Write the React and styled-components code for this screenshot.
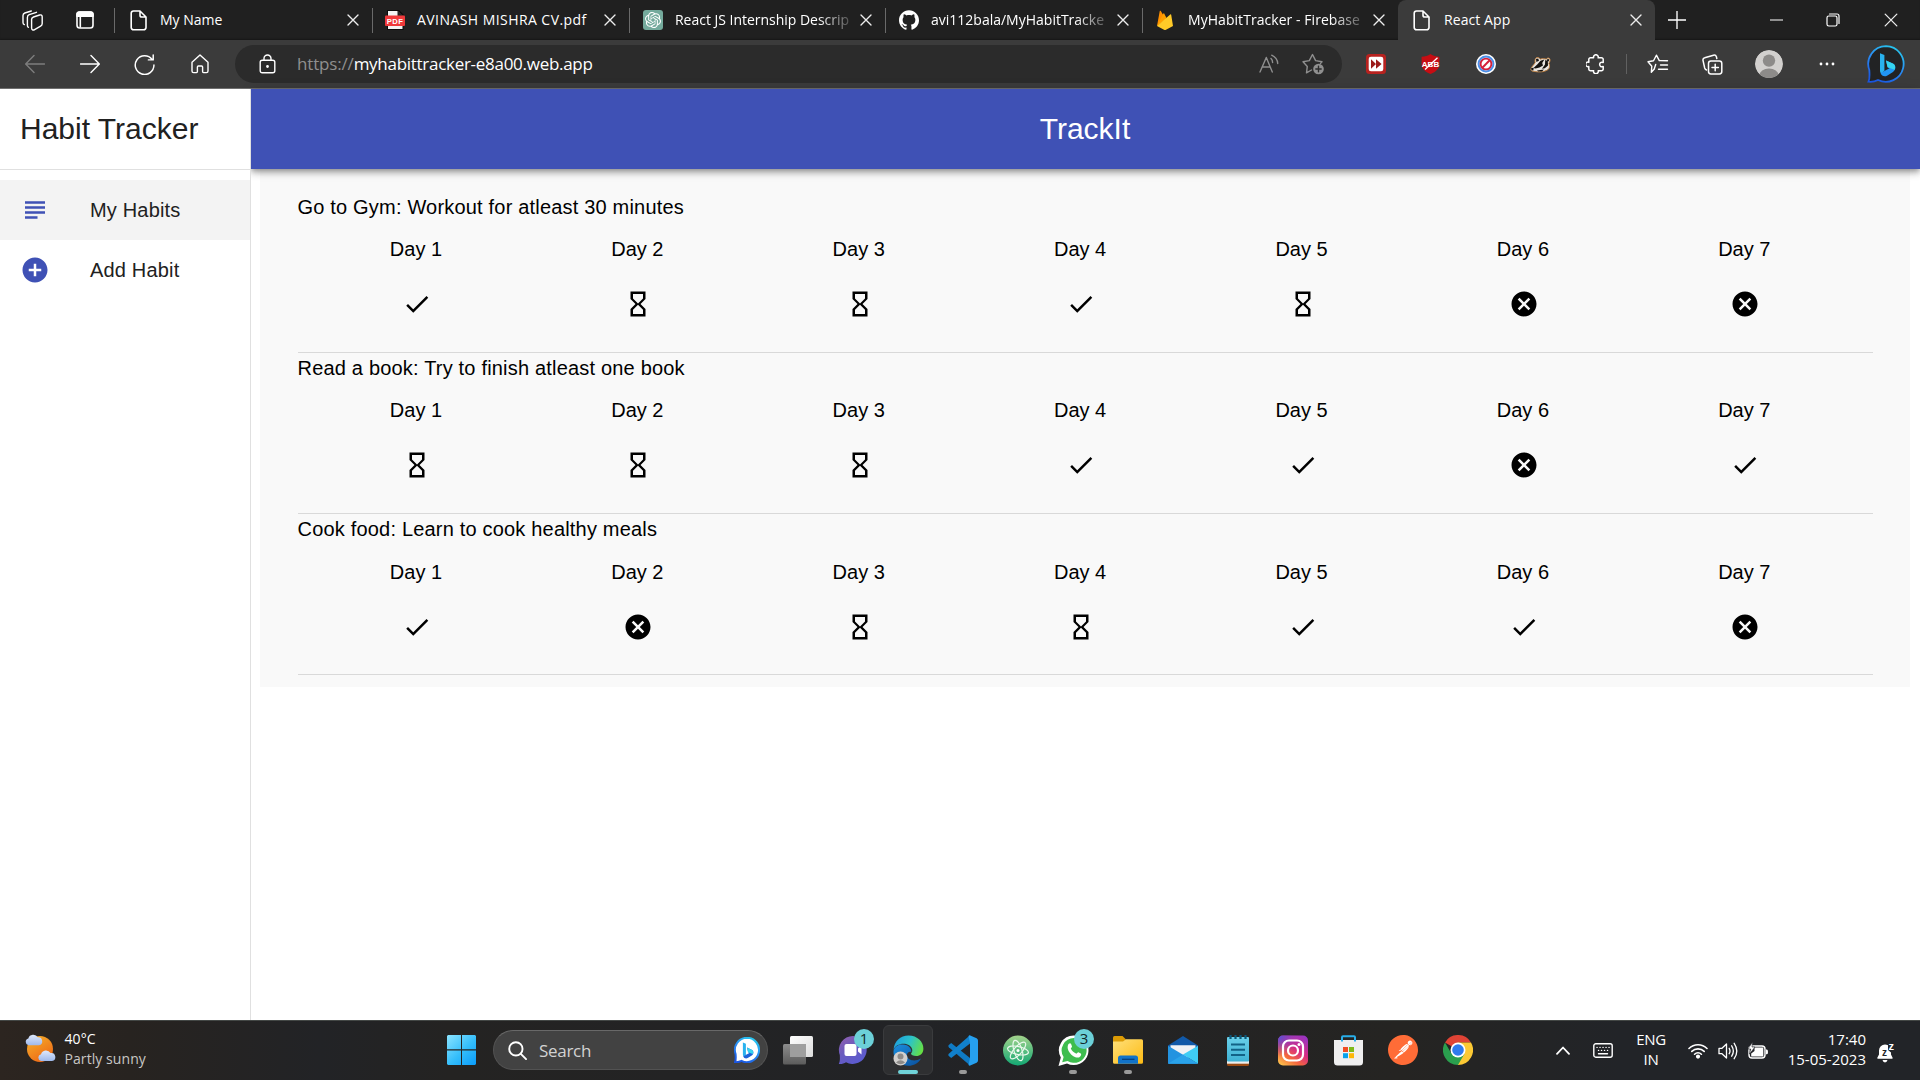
import React from "react";
import styled, { createGlobalStyle, css } from "styled-components";
import { SiOpenai, SiGithub, SiPostman } from "react-icons/si";

const uiFont = `"Open Sans", "Noto Sans", sans-serif`;
const pageFont = `"Liberation Sans", Arial, sans-serif`;

const GlobalStyle = createGlobalStyle`
  * { box-sizing: border-box; }
  html, body { margin: 0; padding: 0; background: #fff; overflow: hidden; }
  svg { display: block; flex: none; }
`;

const Screen = styled.div`
  width: 1920px;
  height: 1080px;
  display: flex;
  flex-direction: column;
  overflow: hidden;
`;

/* ---------- browser tabs ---------- */
const TabStrip = styled.div`
  height: 40px;
  flex: none;
  background: #202020;
  display: flex;
  box-shadow: inset 0 -2px 2px -1px #171717;
`;
const StripTools = styled.div`
  width: 114px;
  flex: none;
  display: flex;
  align-items: center;
  padding-left: 22px;
  gap: 33px;
`;
const Tab = styled.div`
  width: ${(p) => p.$w}px;
  height: 40px;
  flex: none;
  display: flex;
  align-items: center;
  padding-left: ${(p) => p.$pad}px;
  padding-right: 13px;
  color: #fff;
  ${(p) =>
    p.$active
      ? css`
          background: #3b3b3b;
          border-radius: 8px 8px 0 0;
        `
      : css`
          background: linear-gradient(#6a6a6a, #6a6a6a) left center / 1px 25px no-repeat;
        `}
`;
const Favicon = styled.div`
  width: 20px;
  display: flex;
  justify-content: center;
  flex: none;
`;
const TabTitle = styled.div`
  flex: 1;
  min-width: 0;
  margin-left: ${(p) => p.$gap}px;
  margin-right: 6px;
  white-space: nowrap;
  font: 14px/20px ${uiFont};
  letter-spacing: ${(p) => p.$ls}px;
  ${(p) =>
    p.$fade &&
    css`
      mask-image: linear-gradient(to right, #000 calc(100% - 36px), rgba(0, 0, 0, 0.1));
    `}
`;
const WindowControls = styled.div`
  flex: 1;
  display: flex;
  align-items: center;
  padding-left: 13px;
`;
const Slot = styled.div`
  width: ${(p) => p.$w}px;
  height: 100%;
  display: flex;
  align-items: center;
  justify-content: center;
  flex: none;
`;

/* ---------- toolbar ---------- */
const Toolbar = styled.div`
  height: 49px;
  flex: none;
  background: #3b3b3b;
  border-bottom: 1px solid #6f6f6f;
  display: flex;
  align-items: center;
  padding-left: 7px;
`;
const AddressBar = styled.div`
  width: 1107px;
  height: 38px;
  margin: 0 6.4px 0 8px;
  border-radius: 19px;
  background: #2b2b2b;
  display: flex;
  align-items: center;
  padding: 0 6px 0 24px;
`;
const Url = styled.div`
  flex: 1;
  margin-left: 21px;
  color: #fff;
  font: 17px/24px ${uiFont};
  letter-spacing: -0.28px;
`;
const Scheme = styled.span`
  color: #8f8f8f;
  letter-spacing: -0.17px;
`;
const BarDivider = styled.div`
  width: 1px;
  height: 20px;
  margin: 0 3px;
  background: #616161;
`;

/* ---------- web page ---------- */
const Page = styled.div`
  height: 931px;
  flex: none;
  display: flex;
  background: #fff;
  font-family: ${pageFont};
`;
const Sidebar = styled.div`
  width: 251px;
  flex: none;
  position: relative;
  z-index: 2;
  background: #fff;
  border-right: 1px solid #e0e0e0;
`;
const SidebarHeader = styled.div`
  height: 81px;
  border-bottom: 1px solid #e0e0e0;
  padding-left: 20px;
  font-size: 30px;
  line-height: 80px;
  color: #212121;
  white-space: nowrap;
`;
const Nav = styled.div`
  padding-top: 10px;
`;
const NavItem = styled.div`
  height: 60px;
  display: flex;
  align-items: center;
  padding-left: 20px;
  gap: 40px;
  background: ${(p) => (p.$selected ? "#f3f3f3" : "transparent")};
  color: #212121;
  font-size: 20px;
  letter-spacing: 0.17px;
`;
const Main = styled.div`
  flex: 1;
  display: flex;
  flex-direction: column;
`;
const AppBar = styled.div`
  height: 80px;
  flex: none;
  position: relative;
  z-index: 1;
  background: #3f51b5;
  color: #fff;
  text-align: center;
  padding-right: 1px;
  font-size: 30px;
  line-height: 80px;
  box-shadow: 0 2px 5px -1px rgba(0, 0, 0, 0.3), 0 5px 6px 0 rgba(0, 0, 0, 0.16),
    0 1px 12px 0 rgba(0, 0, 0, 0.13);
`;
const HabitPanel = styled.div`
  margin: 0 10px 0 9px;
  padding: 23px 37px 13px 37.5px;
  height: 518px;
  background: #f9f9f9;
`;
const Habit = styled.div`
  height: 161.15px;
  border-bottom: 1px solid #d9d9d9;
  font-size: 20px;
  line-height: 30px;
  color: #000;
`;
const HabitTitle = styled.div`
  height: 42.27px;
  letter-spacing: 0.19px;
`;
const Days = styled.div`
  display: grid;
  grid-template-columns: repeat(7, 221.4px);
  padding-left: 7.75px;
`;
const Day = styled.div`
  display: flex;
  flex-direction: column;
  align-items: center;
  gap: 25px;
`;
const StatusIcon = styled.div`
  padding-left: 2px;
`;

/* ---------- taskbar ---------- */
const Taskbar = styled.div`
  height: 60px;
  flex: none;
  border-top: 1px solid #434745;
  background: linear-gradient(90deg, #2c2520 0, #272320 130px, #222326 320px, #242322 450px, #222326 900px, #252422 1400px, #222428 1620px, #222428 100%);
  display: flex;
  color: #fff;
  font-family: ${uiFont};
`;
const Weather = styled.div`
  width: 434px;
  height: 55px;
  padding-left: 25px;
  display: flex;
  align-items: center;
  gap: 8.5px;
`;
const TwoLines = styled.div`
  font-size: ${(p) => p.$size || 15}px;
  line-height: 20px;
  text-align: ${(p) => p.$align || "left"};
  letter-spacing: ${(p) => p.$ls || 0}px;
  white-space: nowrap;
  padding-bottom: ${(p) => (p.$flush ? 0 : 3)}px;
`;
const Muted = styled.div`
  color: #c9c7c5;
`;
const SearchBox = styled.div`
  width: 275px;
  height: 40px;
  margin: 9px 2.5px 0 4px;
  border-radius: 20px;
  background: #424242;
  border: 1px solid #525252;
  border-top-color: #686868;
  display: flex;
  align-items: center;
  padding: 0 7px 0 14px;
  gap: 12px;
  font-size: 17px;
  letter-spacing: -0.3px;
  color: #d2d2d2;
`;
const Grow = styled.span`
  flex: 1;
`;
const AppSlot = styled.div`
  width: 55px;
  height: 58px;
  flex: none;
  position: relative;
  display: flex;
  align-items: center;
  justify-content: center;
`;
const AppTile = styled.div`
  width: 50px;
  height: 50px;
  border-radius: 6px;
  display: flex;
  align-items: center;
  justify-content: center;
  background: ${(p) => (p.$active ? "#2e2f31" : "transparent")};
  border: 1px solid ${(p) => (p.$active ? "#3a3b3d" : "transparent")};
`;
const Indicator = styled.div`
  position: absolute;
  bottom: 5px;
  left: ${(p) => (p.$active ? 17.5 : 23.5)}px;
  width: ${(p) => (p.$active ? 20 : 8)}px;
  height: 4px;
  border-radius: 2px;
  background: ${(p) => (p.$active ? "#6fd3d9" : "#9a9a9a")};
`;
const Badge = styled.div`
  position: absolute;
  top: 8px;
  left: 28.5px;
  width: 20px;
  height: 20px;
  border-radius: 50%;
  background: #6cd0d8;
  color: #10282a;
  font: 15px/19px ${uiFont};
  text-align: center;
`;
const Tray = styled.div`
  flex: 1;
  display: flex;
  align-items: center;
  justify-content: flex-end;
  padding-right: 19px;
`;
const Clock = styled.div`
  width: 94px;
  display: flex;
  justify-content: flex-end;
  padding-right: 5px;
`;

/* ---------- icons ---------- */
const Line = ({ w = 20, h, vb = "0 0 20 20", c = "#fff", s = 1.2, children }) => (
  <svg width={w} height={h || w} viewBox={vb} fill="none" stroke={c} strokeWidth={s} strokeLinecap="round" strokeLinejoin="round">
    {children}
  </svg>
);
const PageIcon = () => (
  <Line w={17} h={21} vb="0 0 17 21" s={1.6}>
    <path d="M3.5 1H10L16 7V17.5a2.3 2.3 0 0 1-2.3 2.3H3.5A2.3 2.3 0 0 1 1.2 17.5V3.3A2.3 2.3 0 0 1 3.5 1ZM10 1.2V5.2A1.8 1.8 0 0 0 11.8 7H15.8" />
  </Line>
);
const Close = ({ w = 12 }) => (
  <Line w={w} vb="0 0 12 12" s={w > 12 ? 1.1 : 1.35} c="#eee">
    <path d="M1 1 11 11M11 1 1 11" />
  </Line>
);
const PdfIcon = () => (
  <svg width="20" height="20" viewBox="0 0 20 20">
    <path d="M2 0H14L18.5 4.5V20H2Z" fill="#0b0b0b" />
    <path d="M3 1H12.5L17.5 6V19H3Z" fill="#f3f3f3" />
    <path d="M12.5 0.8V6H17.8Z" fill="#222" />
    <rect x="0" y="5.5" width="20" height="10.5" rx="1" fill="#f0383a" />
    <text x="10" y="13.5" textAnchor="middle" fontFamily="Liberation Sans, sans-serif" fontWeight="700" fontSize="7.6" letterSpacing="0.4" fill="#fff">PDF</text>
  </svg>
);
const ChatBadge = styled.div`
  width: 20px;
  height: 20px;
  border-radius: 3px;
  background: #74aa9c;
  color: #fff;
  display: flex;
  align-items: center;
  justify-content: center;
`;
const Flame = () => (
  <svg width="16" height="20" viewBox="0 0 16 20">
    <path d="M0 16 2.7 1.2C2.8.6 3.5.6 3.8 1L6.5 5.5 9 9Z" fill="#ff8f00" />
    <path d="M0 16 6.3 3.7c.3-.5.8-.4 1 0L9.5 8Z" fill="#ffa000" />
    <path d="M0 16 13.2 4.5c.4-.4.9-.2 1 .3L16 16 9 19.7a2 2 0 0 1-2 0Z" fill="#ffca28" />
  </svg>
);
const BingB = ({ w = 38, light }) => (
  <svg width={w} height={w} viewBox="0 0 38 38">
    <defs>
      <linearGradient id={light ? "bl" : "bd"} x1="0.2" y1="1" x2="0.7" y2="0">
        <stop offset="0" stopColor="#1a55e0" />
        <stop offset="0.55" stopColor="#2a8df2" />
        <stop offset="1" stopColor="#27c5ee" />
      </linearGradient>
    </defs>
    <path d="M19 1.2A17.8 17.8 0 1 1 11 35C8 36.5 4.5 37 1.5 36.7 3 33.5 2.6 30 2.3 25A17.8 17.8 0 0 1 19 1.2Z" fill={light ? "#fff" : "#222324"} stroke={`url(#${light ? "bl" : "bd"})`} strokeWidth={light ? 3 : 1.8} />
    <path d="M13 8.2 17.4 10V25.2L14.8 29C13.6 28.2 13 27 13 25.4Z" fill="#29b2ee" />
    <path d="M19 15.4 25.8 18.6C29.5 20.5 29 25 26 27L20 30.7C17.5 32 14.5 31 13.6 28L22.5 23.3 20.6 22.2Z" fill={light ? "#1c63d8" : "#2196f3"} />
    <path d="M19 15.4 25.8 18.6C28.5 20 28.6 23 27.5 24.7L20.6 22.2Z" fill="#35d4ee" />
  </svg>
);
const Material = ({ d, w = 30, c = "#000" }) => (
  <svg width={w} height={w} viewBox="0 0 24 24" fill={c}>
    <path d={d} />
  </svg>
);
const statusPaths = {
  done: "M9 16.2L4.8 12l-1.4 1.4L9 19 21 7l-1.4-1.4L9 16.2z",
  wait: "M6 2v6h.01L6 8.01 10 12l-4 4 .01.01H6V22h12v-5.99h-.01L18 16l-4-4 4-3.99-.01-.01H18V2H6zm10 14.5V20H8v-3.5l4-4 4 4zm-4-5l-4-4V4h8v3.5l-4 4z",
  miss: "M12 2C6.47 2 2 6.47 2 12s4.47 10 10 10 10-4.47 10-10S17.53 2 12 2zm5 13.59L15.59 17 12 13.41 8.41 17 7 15.59 10.59 12 7 8.41 8.41 7 12 10.59 15.59 7 17 8.41 13.41 12 17 15.59z",
};
const AvatarIcon = () => (
  <svg width="28" height="28" viewBox="0 0 28 28">
    <defs>
      <clipPath id="face"><circle cx="14" cy="14" r="14" /></clipPath>
    </defs>
    <g clipPath="url(#face)">
      <circle cx="14" cy="14" r="14" fill="#d2d0ce" />
      <circle cx="14" cy="10.6" r="6.2" fill="#8d8b89" />
      <ellipse cx="14" cy="25.5" rx="9.6" ry="7" fill="#8d8b89" />
    </g>
  </svg>
);

const tabs = [
  { title: "My Name", icon: <PageIcon />, w: 258, pad: 14, gap: 12, ls: 0 },
  { title: "AVINASH MISHRA CV.pdf", icon: <PdfIcon />, w: 257, pad: 13, gap: 12, ls: 0.44 },
  { title: "React JS Internship Descrip", icon: <ChatBadge><SiOpenai size={16} /></ChatBadge>, w: 256, pad: 14, gap: 12, ls: -0.02, fade: true },
  { title: "avi112bala/MyHabitTracke", icon: <SiGithub size={20} />, w: 257, pad: 14, gap: 12, ls: 0, fade: true },
  { title: "MyHabitTracker - Firebase", icon: <Flame />, w: 256, pad: 13, gap: 13, ls: 0.05, fade: true },
  { title: "React App", icon: <PageIcon />, w: 257, pad: 13, gap: 13, ls: 0.08, active: true },
];

const habits = [
  { title: "Go to Gym: Workout for atleast 30 minutes", days: ["done", "wait", "wait", "done", "wait", "miss", "miss"] },
  { title: "Read a book: Try to finish atleast one book", days: ["wait", "wait", "wait", "done", "done", "miss", "done"] },
  { title: "Cook food: Learn to cook healthy meals", days: ["done", "miss", "wait", "wait", "done", "done", "miss"] },
];

const TopTabs = () => (
  <TabStrip>
    <StripTools>
      <Line w={21} h={21} vb="0 0 21 21" s={1.4}>
        <path d="M11.5 7 17.6 5C19.2 4.5 20.2 5.3 20.2 6.8V13.4C20.2 14.7 19.7 15.5 18.6 16.1L12.6 19.6C11 20.5 9.6 19.8 9.6 18.1V9.3C9.6 8 10.3 7.4 11.5 7Z" />
        <path d="M6.4 17.3C5.7 17 5.4 16.3 5.4 15.5V7.4C5.4 5.9 6 5.2 7.2 4.7L14.5 2.3M2.3 14.6C1.4 14.2 1 13.4 1 12.5V5.6C1 4.2 1.6 3.4 2.8 3L9.3 1" />
      </Line>
      <Line w={18} h={18} vb="0 0 18 18" s={1.6}>
        <rect x="1" y="1" width="16" height="16" rx="2.8" />
        <path d="M1 3.5Q1 1 3.5 1H14.5Q17 1 17 3.5V5.2H1ZM4.3 5.5V16" fill="#fff" />
      </Line>
    </StripTools>
    {tabs.map((t) => (
      <Tab key={t.title} $w={t.w} $pad={t.pad} $active={t.active}>
        <Favicon>{t.icon}</Favicon>
        <TabTitle $gap={t.gap} $ls={t.ls} $fade={t.fade}>{t.title}</TabTitle>
        <Close />
      </Tab>
    ))}
    <WindowControls>
      <Line w={18} s={1.5}><path d="M10 0V20M0 10H20" /></Line>
      <Slot $w={61} />
      <Slot $w={58}><Line w={13} h={2} vb="0 0 13 2" s={1.2}><path d="M0 1H13" /></Line></Slot>
      <Slot $w={56}>
        <Line w={14} vb="0 0 14 14"><rect x="1" y="3" width="10" height="10" rx="1.8" /><path d="M3.5 1H11A2 2 0 0 1 13 3V10.5" /></Line>
      </Slot>
      <Slot $w={60}><Close w={14} /></Slot>
    </WindowControls>
  </TabStrip>
);

const BrowserBar = () => (
  <Toolbar>
    <Slot $w={55}><Line w={20} c="#7d7d7d" s={1.4}><path d="M19.5 10H1M9 1.5.7 10 9 18.5" /></Line></Slot>
    <Slot $w={55}><Line w={20} s={1.4}><path d="M.5 10H19M11 1.5 19.3 10 11 18.5" /></Line></Slot>
    <Slot $w={55}><Line w={21} s={1.4}><path d="M17.2 5.2A8.9 8.9 0 1 0 19 10.5M18.3 1V5.6H13.7" /></Line></Slot>
    <Slot $w={55}><Line w={20} s={1.4}><path d="M2 8.3 10 1 18 8.3V17A1.6 1.6 0 0 1 16.4 18.6H13.5Q12.6 18.6 12.6 17.6V13Q12.6 12 11.6 12H8.4Q7.4 12 7.4 13V17.6Q7.4 18.6 6.5 18.6H3.6A1.6 1.6 0 0 1 2 17Z" /></Line></Slot>
    <AddressBar>
      <Line w={17} h={20} vb="0 0 17 20" s={1.4}>
        <rect x="1.2" y="6.2" width="14.6" height="12.6" rx="2" />
        <path d="M5 6V4.5A3.5 3.5 0 0 1 12 4.5V6" />
        <circle cx="8.5" cy="12.5" r="0.7" fill="#fff" />
      </Line>
      <Url><Scheme>https://</Scheme>myhabittracker-e8a00.web.app</Url>
      <Slot $w={45}>
        <Line w={20} c="#8f8f8f" s={1.4}><path d="M1 18 7.3 3.5 13.3 18M3.3 13H11.2M12 4.5Q13.6 6 13.6 8.5M12.7 1.2Q18.5 4 18.7 9.5" /></Line>
      </Slot>
      <Slot $w={45}>
        <svg width="23" height="22" viewBox="0 0 23 22" fill="none" stroke="#8f8f8f" strokeWidth="1.4" strokeLinejoin="round" strokeLinecap="round">
          <path d="M9.5 17 4.5 19.8 5.3 13.4 1 8.8 7.3 7.6 10.5 1.5 13.6 7.6 20 8.8 18.4 10.4" />
          <circle cx="16.5" cy="16" r="5.3" fill="#8f8f8f" stroke="none" />
          <path d="M16.5 13.3V18.7M13.8 16H19.2" stroke="#2b2b2b" />
        </svg>
      </Slot>
    </AddressBar>
    <Slot $w={55}>
      <svg width="20" height="20" viewBox="0 0 20 20">
        <rect width="20" height="20" rx="3.5" fill="#b7221f" />
        <rect x="2.7" y="2.7" width="14.6" height="14.6" rx="2.3" fill="#fff" />
        <path d="M5 5.2 10 10 5 14.8ZM10 5.2 15.6 10 10 14.8Z" fill="#9c1c1b" />
      </svg>
    </Slot>
    <Slot $w={55}>
      <svg width="19" height="20" viewBox="0 0 19 20">
        <path d="M9.5 0C12 1.8 15 2.5 18.4 2.8V10C18.4 15 14 18.5 9.5 20 5 18.5.6 15 .6 10V2.8C4 2.5 7 1.8 9.5 0Z" fill="#c70d13" />
        <text x="9.5" y="12.8" textAnchor="middle" fontFamily="Liberation Sans, sans-serif" fontWeight="700" fontSize="8" fill="#fff">ABB</text>
        <path d="M4 15.5 16.5 3.8" stroke="#fff" strokeWidth="1.3" />
      </svg>
    </Slot>
    <Slot $w={55}>
      <svg width="20" height="20" viewBox="0 0 20 20">
        <circle cx="10" cy="10" r="10" fill="#fff" />
        <circle cx="10" cy="10" r="7.4" fill="#fff" stroke="#4a8fe8" strokeWidth="2" />
        <circle cx="10" cy="10" r="5.4" fill="#fff" stroke="#d3213c" strokeWidth="1.9" />
        <path d="M6.3 13.7 13.7 6.3" stroke="#d3213c" strokeWidth="2" />
      </svg>
    </Slot>
    <Slot $w={55}>
      <svg width="21" height="17" viewBox="0 0 21 17">
        <path d="M.8 13.2C1.5 10.5 4 9 5.2 6.5 4.6 4.5 5.2 2.2 6.8 1.6 8.3 1.2 9.6 2 10.2 3.2 12.5 2.4 14.8 2.6 16.4 3.2 17 2 18.6 1.6 19.6 2.6 20.6 4 19.8 6 18.8 7.2 20 9.5 19.8 12 18 13.6 14 16.4 8 16.2 4.5 15.4 2.5 15.4.8 14.8.8 13.2Z" fill="#e8e4df" stroke="#c9843f" strokeWidth="0.9" />
        <path d="M3.5 12 7.5 8.2 10.5 4.8 14.4 3.4 12.2 7 13 9.4 9.5 11.6 5.5 12.6ZM15.2 4 17.8 5 18 9.4 14.8 12.2 12 12.8 15 8.4ZM6 3 8.2 2.6 9 4.8 6.4 6ZM17.3 3 19.2 3.2 18.8 5.4 17 4.8ZM1.2 12 3.6 11.8 3.4 14.6 1.4 14.2ZM7 14.6 14 13.4 12 15.6 8 15.6Z" fill="#15120f" />
      </svg>
    </Slot>
    <Slot $w={55}>
      <Line w={20} s={1.5}><path d="M4.5 3.8H7.6A2.4 2.4 0 1 1 12.2 3.8H15.5A1.7 1.7 0 0 1 17.2 5.5V8.4H16.5A2.2 2.2 0 1 0 16.5 12.6H17.2V15A1.7 1.7 0 0 1 15.5 16.7H12.2A2.4 2.4 0 1 1 7.6 16.7H4.5A1.7 1.7 0 0 1 2.8 15V12.5A2.3 2.3 0 1 1 2.8 8.2V5.5A1.7 1.7 0 0 1 4.5 3.8Z" /></Line>
    </Slot>
    <BarDivider />
    <Slot $w={55}>
      <Line w={22} h={20} vb="0 0 22 20" s={1.4}><path d="M7.5 14.8 4.3 18.3 4.8 12.3 1 7.8 6.5 6.8 9.4 1.2 12.3 6.6 20.5 6.8M13.5 11H20.5M11.5 15.3H20.5M8.7 10.5 7.3 14.8" /></Line>
    </Slot>
    <Slot $w={55}>
      <Line w={21} vb="0 0 21 21" s={1.5}><rect x="6.5" y="7" width="13.3" height="13" rx="2.4" /><path d="M13.2 10.3V16.7M10 13.5H16.4M4.5 16C3.5 15.6 3 15 2.7 14L1 6.3C.8 5 1.5 4 2.7 3.7L11.5 1.2C13 .9 14 1.5 14.4 2.7L14.8 4.5" /></Line>
    </Slot>
    <Slot $w={58}><AvatarIcon /></Slot>
    <Slot $w={58}>
      <svg width="16" height="4" viewBox="0 0 16 4" fill="#fff"><circle cx="2" cy="2" r="1.4" /><circle cx="8" cy="2" r="1.4" /><circle cx="14" cy="2" r="1.4" /></svg>
    </Slot>
    <Slot $w={60}><BingB /></Slot>
  </Toolbar>
);

const EdgeIcon = () => (
  <svg width="31" height="31" viewBox="0 0 31 31">
    <defs>
      <linearGradient id="eg" x1="0" y1="0.3" x2="1" y2="0.6">
        <stop offset="0" stopColor="#1d9fe0" /><stop offset="0.5" stopColor="#2cc3c9" /><stop offset="1" stopColor="#66e043" />
      </linearGradient>
      <linearGradient id="eb" x1="0" y1="0" x2="1" y2="1">
        <stop offset="0" stopColor="#1b8fe0" /><stop offset="1" stopColor="#0a4f9c" />
      </linearGradient>
    </defs>
    <path d="M.6 15.5C2 11 6 9.2 10 9.5 16 10 18.5 13.5 18.3 17 16 16 13.5 18 14 21 15 25.5 22 27 28 23.5 24.5 30 17 32 10.5 30 3.5 27.5-.2 21.5.6 15.5Z" fill="url(#eb)" />
    <path d="M.6 15C1 6.5 7.5.6 15.5.6 24.5.6 30.5 7 30.4 13.7 30.3 18.5 27 21 23.3 21 20 21 18 20 18 18.8 18 18 19.5 17.5 19.3 15 19 11.5 15 8.8 10.5 8.8 6 8.8 1.8 11 .6 15Z" fill="url(#eg)" />
    <circle cx="7.5" cy="23.5" r="7" fill="#d2d0ce" />
    <circle cx="7.5" cy="21.6" r="3" fill="#8d8b89" />
    <path d="M3 27.6Q7.5 23 12 27.6 7.5 31 3 27.6Z" fill="#8d8b89" />
  </svg>
);
const TaskViewIcon = () => (
  <svg width="30" height="30" viewBox="0 0 30 30">
    <defs><linearGradient id="tv" x1="0" y1="0" x2="1" y2="1"><stop offset="0" stopColor="#fff" /><stop offset="1" stopColor="#dcdcdc" /></linearGradient>
    <linearGradient id="tw" x1="0" y1="0" x2="0" y2="1"><stop offset="0" stopColor="#8c8c8c" /><stop offset="1" stopColor="#5c5c5c" /></linearGradient></defs>
    <rect x="7" y="1" width="23" height="21" rx="1.5" fill="url(#tv)" />
    <rect x="0" y="9" width="23" height="20.5" rx="1.5" fill="url(#tw)" />
    <path d="M7 9H23V22H7Z" fill="#9f9f9f" />
  </svg>
);
const TeamsIcon = () => (
  <svg width="30" height="30" viewBox="0 0 30 30">
    <defs><linearGradient id="tm" x1="0" y1="0" x2="0.6" y2="1"><stop offset="0" stopColor="#9560ae" /><stop offset="0.5" stopColor="#6b5bbd" /><stop offset="1" stopColor="#5b5bd0" /></linearGradient></defs>
    <path d="M15 1A14 14 0 1 1 8 27.3C6 28.8 3 29.4.8 29 2 26.5 2 24.5 1.8 20A14 14 0 0 1 15 1Z" fill="url(#tm)" />
    <rect x="6.5" y="9" width="12" height="12" rx="2" fill="#fff" /><path d="M20 13.5 23.5 10.5V19.5L20 16.5Z" fill="#fff" />
  </svg>
);
const VsIcon = () => (
  <svg width="30" height="31" viewBox="0 0 30 31">
    <path d="M3.2 8 22 23V30.5L.8 12.2Q-.2 11 .8 10Z" fill="#0f7ac4" />
    <path d="M3.2 23 22 8.4V.3L.8 18.8Q-.2 20 .8 21Z" fill="#1180cb" />
    <path d="M21.7.3 28.6 3.3Q30 4 30 5.5V25.5Q30 27 28.6 27.7L21.7 30.8 20.5 30 22 23V8L20.5 1Z" fill="#26a0ef" />
  </svg>
);
const AtomIcon = () => (
  <svg width="30" height="31" viewBox="0 0 30 31">
    <defs><linearGradient id="at" x1="0" y1="0" x2="0" y2="1"><stop offset="0" stopColor="#a3d38c" /><stop offset="1" stopColor="#13a873" /></linearGradient></defs>
    <circle cx="15" cy="15.5" r="15" fill="url(#at)" />
    <g fill="none" stroke="#e9f8ec" strokeWidth="1.2">
      <ellipse cx="15" cy="15.5" rx="10.6" ry="4" transform="rotate(12 15 15.5)" />
      <ellipse cx="15" cy="15.5" rx="10.6" ry="4" transform="rotate(72 15 15.5)" />
      <ellipse cx="15" cy="15.5" rx="10.6" ry="4" transform="rotate(132 15 15.5)" />
    </g>
    <circle cx="15" cy="15.5" r="1.5" fill="#fff" />
  </svg>
);
const WhatsBubble = () => (
  <svg width="31" height="31" viewBox="0 0 31 31">
    <path d="M16 .5A14.8 14.8 0 1 1 9 28.5L.5 31 2.8 22.5A14.8 14.8 0 0 1 16 .5Z" fill="#fff" />
    <path d="M16 3A12.4 12.4 0 1 1 9.6 25.9L4.2 27.2 5.6 22A12.4 12.4 0 0 1 16 3Z" fill="#3ebd4e" />
    <path d="M10.5 9C12 7.5 12.8 8.2 13.3 9.6L14 11.4C14.2 12.2 12.6 13 12.8 13.6 14 16 15.5 17.5 18 18.6 18.8 18.9 19.6 17 20.4 17.2L22.8 18.5C23.7 19 23 21.6 21 22.4 15.5 24 7 15 10.5 9Z" fill="#fff" />
  </svg>
);
const FolderIcon = () => (
  <svg width="30" height="28" viewBox="0 0 30 28">
    <defs><linearGradient id="fo" x1="0" y1="0" x2="1" y2="1"><stop offset="0" stopColor="#ffe07a" /><stop offset="1" stopColor="#fdbb14" /></linearGradient></defs>
    <path d="M0 1.5Q0 0 1.5 0H9.5L13 3.5V8H0Z" fill="#dc9b05" />
    <path d="M0 5.5H10L13 3.2H28.5Q30 3.2 30 4.7V26.2Q30 27.7 28.5 27.7H1.5Q0 27.7 0 26.2Z" fill="url(#fo)" />
    <path d="M5 27.7V22Q5 19.5 7.5 19.5H22.5Q25 19.5 25 22V27.7Z" fill="#1273c8" />
    <path d="M9 23.3H21.5" stroke="#073f7d" strokeWidth="1.3" />
  </svg>
);
const MailIcon = () => (
  <svg width="30" height="28" viewBox="0 0 30 28">
    <path d="M0 9.5 15 0 30 9.5V20H0Z" fill="#1159a8" />
    <path d="M2.5 9.3H27.5V18L15 24 2.5 18Z" fill="#f0f2f5" />
    <path d="M0 9.7 30 27.8H0Z" fill="#2393e0" />
    <path d="M30 9.7V27.8L15 18.6Z" fill="#3fcdf5" />
    <path d="M0 27.8 15 18.6 30 27.8Z" fill="#2aa3ea" />
  </svg>
);
const NoteIcon = () => (
  <svg width="22" height="31" viewBox="0 0 22 31">
    <defs><linearGradient id="no" x1="0" y1="0" x2="0" y2="1"><stop offset="0" stopColor="#69d0ea" /><stop offset="1" stopColor="#3fb2d4" /></linearGradient></defs>
    <path d="M0 27H22V29.5Q22 31 20.5 31H1.5Q0 31 0 29.5Z" fill="#9a4a12" />
    <path d="M0 25H22V28.7H0Z" fill="#eeeeee" />
    <rect y="2" width="22" height="24.5" rx="1" fill="url(#no)" />
    <path d="M3.5 0V4M8.5 0V4M13.5 0V4M18.5 0V4" stroke="#0b5778" strokeWidth="2.2" />
    <path d="M4 9.5H18M4 14.7H18M4 20H18" stroke="#126286" strokeWidth="1.9" />
  </svg>
);
const InstaIcon = () => (
  <svg width="30" height="31" viewBox="0 0 30 31">
    <defs>
      <linearGradient id="ia" x1="0.1" y1="1" x2="0.8" y2="0"><stop offset="0" stopColor="#fdc64d" /><stop offset="0.3" stopColor="#f5693c" /><stop offset="0.6" stopColor="#d72c82" /><stop offset="1" stopColor="#9a34c0" /></linearGradient>
      <radialGradient id="ic" cx="0" cy="0" r="0.7"><stop offset="0" stopColor="#4a54d8" /><stop offset="1" stopColor="#7a3fd0" stopOpacity="0" /></radialGradient>
    </defs>
    <rect y="0.5" width="30" height="30" rx="5" fill="url(#ia)" /><rect y="0.5" width="30" height="30" rx="5" fill="url(#ic)" />
    <g fill="none" stroke="#fff" strokeWidth="2.2"><rect x="5" y="5.5" width="20" height="20" rx="6" /><circle cx="15" cy="15.5" r="5" /></g>
    <circle cx="21" cy="9.6" r="1.5" fill="#fff" />
  </svg>
);
const StoreIcon = () => (
  <svg width="29" height="31" viewBox="0 0 29 31">
    <path d="M8 7V2.2Q8 1.2 9 1.2H20Q21 1.2 21 2.2V7" fill="none" stroke="#28aee9" strokeWidth="2" />
    <path d="M0 5H29V27Q29 30.5 25.5 30.5H3.5Q0 30.5 0 27Z" fill="#efefef" />
    <path d="M9 12H14V17H9Z" fill="#f04e23" /><path d="M15 12H20V17H15Z" fill="#7fba1a" /><path d="M9 18.2H14V23.2H9Z" fill="#08a2ec" /><path d="M15 18.2H20V23.2H15Z" fill="#fdb707" />
    <path d="M8 5V6.5M21 5V6.5" stroke="#28aee9" strokeWidth="2" />
  </svg>
);
const PostmanDisc = styled.div`
  width: 30px;
  height: 30px;
  border-radius: 50%;
  background: radial-gradient(circle, #fff 0 13px, transparent 14px);
  color: #ff6c37;
`;
const ChromeIcon = () => (
  <svg width="30" height="30" viewBox="0 0 30 30">
    <path d="M15 15 2 7.5A15 15 0 0 1 28 7.5H15Z" fill="#df4335" />
    <path d="M15 15V7.5H28A15 15 0 0 1 15 30Z" fill="#fcc934" />
    <path d="M15 15 21.5 18.8 15 30A15 15 0 0 1 2 7.5L8.5 18.8Z" fill="#2a9f4e" />
    <circle cx="15" cy="15" r="7.5" fill="#fff" /><circle cx="15" cy="15" r="5.8" fill="#2f7bee" />
  </svg>
);
const WindowsIcon = () => (
  <svg width="29" height="30" viewBox="0 0 29 30">
    <defs><linearGradient id="wi" gradientUnits="userSpaceOnUse" x1="0" y1="0" x2="29" y2="30"><stop offset="0" stopColor="#8be4ff" /><stop offset="0.55" stopColor="#33bdfb" /><stop offset="1" stopColor="#0a9cfb" /></linearGradient></defs>
    <path d="M1 0H14V14.3H0V1ZM15 0H28L29 1V14.3H15ZM0 15.5H14V30H1L0 29ZM15 15.5H29V29L28 30H15Z" fill="url(#wi)" />
  </svg>
);
const WeatherIcon = () => (
  <svg width="31" height="29" viewBox="0 0 31 29">
    <defs>
      <linearGradient id="su" x1="0" y1="0" x2="0.6" y2="1"><stop offset="0" stopColor="#f5b42c" /><stop offset="1" stopColor="#ee6a16" /></linearGradient>
      <linearGradient id="cl" x1="0" y1="0" x2="0" y2="1"><stop offset="0" stopColor="#dfe9fb" /><stop offset="1" stopColor="#9fb9ec" /></linearGradient>
    </defs>
    <circle cx="15" cy="15" r="13" fill="url(#su)" />
    <path d="M3.5 11.2A3.5 3.5 0 0 1 3.3 4.4 5.2 5.2 0 0 1 12.8 3.3 4 4 0 0 1 14 11.2Z" fill="url(#cl)" />
    <path d="M16 27A3.5 3.5 0 0 1 16 20.2 5.2 5.2 0 0 1 25.5 19 4 4 0 0 1 27 27Z" fill="url(#cl)" />
  </svg>
);

const apps = [
  { name: "view", icon: <TaskViewIcon /> },
  { name: "teams", icon: <TeamsIcon />, badge: 1 },
  { name: "edge", icon: <EdgeIcon />, active: true, running: true },
  { name: "code", icon: <VsIcon />, running: true },
  { name: "atom", icon: <AtomIcon /> },
  { name: "whatsapp", icon: <WhatsBubble />, badge: 3, running: true },
  { name: "files", icon: <FolderIcon />, running: true },
  { name: "mail", icon: <MailIcon /> },
  { name: "notes", icon: <NoteIcon /> },
  { name: "insta", icon: <InstaIcon /> },
  { name: "store", icon: <StoreIcon /> },
  { name: "postman", icon: <PostmanDisc><SiPostman size={30} /></PostmanDisc> },
  { name: "chrome", icon: <ChromeIcon /> },
];

const BottomBar = () => (
  <Taskbar>
    <Weather>
      <WeatherIcon />
      <TwoLines $size={14} $ls={0.07} $flush>
        <div>40°C</div>
        <Muted>Partly sunny</Muted>
      </TwoLines>
    </Weather>
    <AppSlot><WindowsIcon /></AppSlot>
    <SearchBox>
      <Line w={19} h={19} s={2}><circle cx="8.3" cy="8.3" r="7" /><path d="M13.5 13.5 19 19" /></Line>
      <Grow>Search</Grow>
      <BingB w={26} light />
    </SearchBox>
    {apps.map((a) => (
      <AppSlot key={a.name}>
        <AppTile $active={a.active}>{a.icon}</AppTile>
        {a.badge && <Badge>{a.badge}</Badge>}
        {a.running && <Indicator $active={a.active} />}
      </AppSlot>
    ))}
    <Tray>
      <Slot $w={40}><Line w={14} h={9} vb="0 0 14 9" s={1.8}><path d="M1 7.8 7 1.5 13 7.8" /></Line></Slot>
      <Slot $w={40}>
        <Line w={20} h={15} vb="0 0 20 15" s={1.4}>
          <rect x="0.8" y="0.8" width="18.4" height="13.4" rx="2" />
          <path d="M4 4.4H4.1M7 4.4H7.1M10 4.4H10.1M13 4.4H13.1M16 4.4H16.1M5.5 7.4H5.6M8.5 7.4H8.6M11.5 7.4H11.6M14.5 7.4H14.6M5.5 10.8H14.5" />
        </Line>
      </Slot>
      <Slot $w={56}><TwoLines $align="center" $ls={-0.3}><div>ENG</div><div>IN</div></TwoLines></Slot>
      <Slot $w={38}>
        <Line w={20} h={16} vb="0 0 20 16" s={1.6}><path d="M1 5.5A12.7 12.7 0 0 1 19 5.5M3.8 8.4A8.8 8.8 0 0 1 16.2 8.4M6.6 11.2A4.8 4.8 0 0 1 13.4 11.2" /><circle cx="10" cy="13.6" r="1.3" fill="#fff" /></Line>
      </Slot>
      <Slot $w={22}>
        <Line w={20} h={18} vb="0 0 20 18" s={1.3}><path d="M1 6.3H4L8.5 2V16L4 11.7H1ZM11.2 6.3Q12.8 9 11.2 11.7M13.7 3.8Q17 9 13.7 14.2M16.2 1.3Q21.4 9 16.2 16.7" /></Line>
      </Slot>
      <Slot $w={38}>
        <svg width="20" height="17" viewBox="0 0 20 17">
          <rect x="1" y="4" width="16" height="12" rx="3" fill="none" stroke="#fff" strokeWidth="1.4" /><path d="M6.5 5.5H15.3V14.5H3.2V11.5L6.5 9ZM18 7.5H19Q20 7.5 20 10 20 12.3 19 12.3H18Z" fill="#fff" />
          <path d="M4.5 0 0 7H2.7L1.5 12 7 5H4Z" fill="#fff" stroke="#222428" strokeWidth="0.6" />
        </svg>
      </Slot>
      <Clock><TwoLines $align="right"><div>17:40</div><div>15-05-2023</div></TwoLines></Clock>
      <Slot $w={30}>
        <svg width="20" height="24" viewBox="-1 -4 20 24" overflow="visible">
          <path d="M8 1.5A6 6 0 0 0 2 7.5V11.5L.3 14.8Q0 15.8 1 15.8H15Q16 15.8 15.6 14.8L14 11.5V9.5L11 7V2.3Q9.5 1.5 8 1.5ZM5.5 17H10.5Q10 19.4 8 19.4 6 19.4 5.5 17Z" fill="#fff" />
          <text x="5" y="13" fontFamily="Liberation Sans, sans-serif" fontWeight="700" fontSize="10" fill="#222428">z</text>
          <text x="11.5" y="7" fontFamily="Liberation Sans, sans-serif" fontWeight="700" fontSize="11" fill="#fff">z</text>
        </svg>
      </Slot>
    </Tray>
  </Taskbar>
);

export default function App() {
  return (
    <Screen>
      <GlobalStyle />
      <TopTabs />
      <BrowserBar />
      <Page>
        <Sidebar>
          <SidebarHeader>Habit Tracker</SidebarHeader>
          <Nav>
            <NavItem $selected>
              <Material c="#3f51b5" d="M14 17H4v2h10v-2zm6-8H4v2h16V9zM4 15h16v-2H4v2zM4 5v2h16V5H4z" />
              <span>My Habits</span>
            </NavItem>
            <NavItem>
              <Material c="#3f51b5" d="M12 2C6.48 2 2 6.48 2 12s4.48 10 10 10 10-4.48 10-10S17.52 2 12 2zm5 11h-4v4h-2v-4H7v-2h4V7h2v4h4v2z" />
              <span>Add Habit</span>
            </NavItem>
          </Nav>
        </Sidebar>
        <Main>
          <AppBar>TrackIt</AppBar>
          <HabitPanel>
            {habits.map((h) => (
              <Habit key={h.title}>
                <HabitTitle>{h.title}</HabitTitle>
                <Days>
                  {h.days.map((s, i) => (
                    <Day key={i}>
                      <div>Day {i + 1}</div>
                      <StatusIcon><Material d={statusPaths[s]} /></StatusIcon>
                    </Day>
                  ))}
                </Days>
              </Habit>
            ))}
          </HabitPanel>
        </Main>
      </Page>
      <BottomBar />
    </Screen>
  );
}
